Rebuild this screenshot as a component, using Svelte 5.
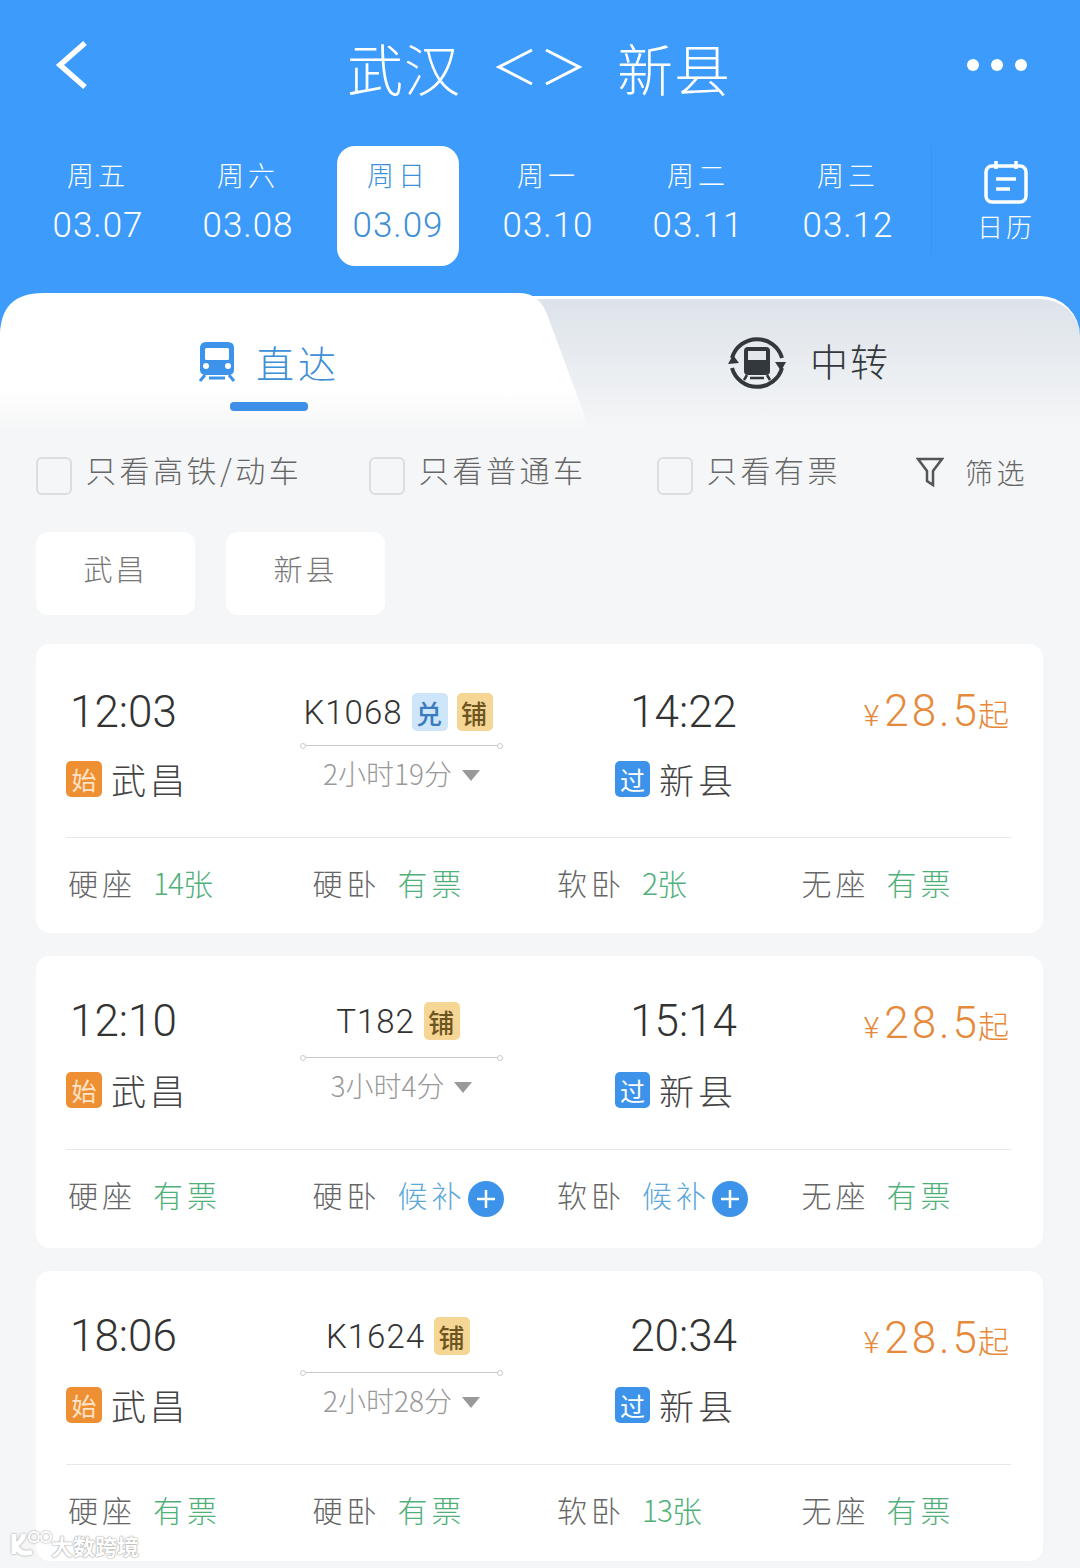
<script>
  const days = [
    { week: "周五", date: "03.07" },
    { week: "周六", date: "03.08" },
    { week: "周日", date: "03.09", active: true },
    { week: "周一", date: "03.10" },
    { week: "周二", date: "03.11" },
    { week: "周三", date: "03.12" }
  ];

  const filters = [
    { label: "只看高铁/动车", width: 333 },
    { label: "只看普通车", width: 288 },
    { label: "只看有票", width: 259 }
  ];

  const trains = [
    {
      depart: "12:03",
      arrive: "14:22",
      code: "K1068",
      tags: ["兑", "铺"],
      duration: "2小时19分",
      seats: [
        { name: "硬座", value: "14张", num: true },
        { name: "硬卧", value: "有票" },
        { name: "软卧", value: "2张", num: true },
        { name: "无座", value: "有票" }
      ]
    },
    {
      depart: "12:10",
      arrive: "15:14",
      code: "T182",
      tags: ["铺"],
      duration: "3小时4分",
      seats: [
        { name: "硬座", value: "有票" },
        { name: "硬卧", value: "候补", wait: true },
        { name: "软卧", value: "候补", wait: true },
        { name: "无座", value: "有票" }
      ]
    },
    {
      depart: "18:06",
      arrive: "20:34",
      code: "K1624",
      tags: ["铺"],
      duration: "2小时28分",
      seats: [
        { name: "硬座", value: "有票" },
        { name: "硬卧", value: "有票" },
        { name: "软卧", value: "13张", num: true },
        { name: "无座", value: "有票" }
      ]
    }
  ];
</script>

<div class="page">
  <header class="top">
    <div class="nav">
      <svg class="back" viewBox="0 0 34 50" width="34" height="50">
        <path d="M30 3 L5 25 L30 47" fill="none" stroke="#fff" stroke-width="5.5" />
      </svg>
      <div class="title">
        <span>武汉</span>
        <svg viewBox="0 0 86 40" width="86" height="40">
          <path d="M36 3 L3 20 L36 37 M50 3 L83 20 L50 37" fill="none" stroke="#fff" stroke-width="3" />
        </svg>
        <span>新县</span>
      </div>
      <div class="dots"><i></i><i></i><i></i></div>
    </div>

    <div class="dates">
      {#each days as day}
        <div class="day" class:active={day.active}>
          <span class="week">{day.week}</span>
          <span class="date">{day.date}</span>
        </div>
      {/each}
      <div class="calendar">
        <svg viewBox="0 0 44 44" width="44" height="44">
          <rect x="2" y="6" width="40" height="36" rx="6" fill="none" stroke="#fff" stroke-width="3.5" />
          <path d="M12 1 V9 M32 1 V9 M12 19 H32 M12 29 H26" fill="none" stroke="#fff" stroke-width="3.5" />
        </svg>
        <span>日历</span>
      </div>
    </div>
  </header>

  <div class="tabs-wrap">
    <div class="tabs">
      <div class="tab tab-on">
        <div class="tab-label">
          <svg viewBox="0 0 38 40" width="38" height="40">
            <path d="M8 0 H30 Q36 0 36 6 V28 Q36 33 30 33 H8 Q2 33 2 28 V6 Q2 0 8 0 Z" fill="#3d93ea" />
            <rect x="7" y="6" width="24" height="12" rx="1.5" fill="#fff" />
            <circle cx="8" cy="24" r="3" fill="#fff" />
            <circle cx="30" cy="24" r="3" fill="#fff" />
            <path d="M7 33 L2 39 M31 33 L36 39 M11 36 H27" stroke="#3d93ea" stroke-width="3" fill="none" />
          </svg>
          <span>直达</span>
        </div>
        <i class="underline"></i>
      </div>
      <div class="tab tab-off">
        <svg viewBox="0 0 58 58" width="58" height="58">
          <path d="M4 24 A26 26 0 0 1 54 24 M54 34 A26 26 0 0 1 4 34" fill="none" stroke="#33383c" stroke-width="4" />
          <path d="M0 30 L5 21 L11 29 Z M47 28 L53 37 L58 28 Z" fill="#33383c" />
          <path d="M20 13 H38 Q42 13 42 17 V37 Q42 41 38 41 H20 Q16 41 16 37 V17 Q16 13 20 13 Z" fill="#33383c" />
          <rect x="20" y="17" width="18" height="9" fill="#e3e7ec" />
          <path d="M19 41 L16 46 M39 41 L42 46 M22 44 H36" stroke="#33383c" stroke-width="2.5" fill="none" />
        </svg>
        <span>中转</span>
      </div>
    </div>
  </div>

  <div class="filters">
    {#each filters as item}
      <div class="filter" style="width:{item.width}px">
        <i class="box"></i>
        <span>{item.label}</span>
      </div>
    {/each}
    <div class="filter-btn">
      <svg viewBox="0 0 28 30" width="28" height="30">
        <path d="M2 2 H26 L17 14 V28 L11 24 V14 Z" fill="none" stroke="#555" stroke-width="2.5" />
      </svg>
      <span>筛选</span>
    </div>
  </div>

  <div class="chips">
    <div class="chip">武昌</div>
    <div class="chip">新县</div>
  </div>

  <div class="cards">
    {#each trains as train}
      <section class="card">
        <div class="main">
          <div class="col">
            <div class="time">{train.depart}</div>
            <div class="station"><b class="badge start">始</b>武昌</div>
          </div>
          <div class="mid">
            <div class="code">
              <span>{train.code}</span>
              {#each train.tags as tag}
                <b class="tag" class:swap={tag === "兑"}>{tag}</b>
              {/each}
            </div>
            <div class="line"></div>
            <div class="duration">{train.duration}<i class="caret"></i></div>
          </div>
          <div class="col arrive">
            <div class="time">{train.arrive}</div>
            <div class="station"><b class="badge pass">过</b>新县</div>
          </div>
          <div class="price"><small>¥</small>28.5<small class="from">起</small></div>
        </div>
        <div class="seats">
          {#each train.seats as seat}
            <div class="seat">
              <span class="seat-name">{seat.name}</span>
              <span class="seat-value" class:wait={seat.wait} class:num={seat.num}>{seat.value}</span>
              {#if seat.wait}
                <svg class="plus" viewBox="0 0 36 36" width="36" height="36">
                  <circle cx="18" cy="18" r="18" fill="#3d93ea" />
                  <path d="M9 18 H27 M18 9 V27" stroke="#fff" stroke-width="2.5" />
                </svg>
              {/if}
            </div>
          {/each}
        </div>
      </section>
    {/each}
  </div>

  <div class="mark">
    <svg viewBox="0 0 46 34" width="46" height="34">
      <path d="M6 6 V26 M6 18 Q14 14 16 6 M8 18 Q12 28 24 24" fill="none" stroke="#fff" stroke-width="5" />
      <circle cx="26" cy="9" r="5" fill="none" stroke="#fff" stroke-width="2" />
      <circle cx="38" cy="9" r="5" fill="none" stroke="#fff" stroke-width="2" />
    </svg>
    <span>大数跨境</span>
  </div>
</div>

<style>
  :global(body) {
    background: #f5f6f7;
    font-family: "Noto Sans CJK SC", "Noto Sans", sans-serif;
  }

  .page {
    position: relative;
    width: 1080px;
    height: 1568px;
    overflow: hidden;
    background: #f5f6f7;
    font-weight: 300;
  }

  .top {
    height: 296px;
    background: #3d9bfb;
    color: #fff;
  }

  .nav {
    display: flex;
    align-items: center;
    justify-content: space-between;
    height: 130px;
    padding: 0 53px 0 55px;
  }

  .title {
    display: flex;
    align-items: center;
    gap: 35px;
    font-size: 56px;
    line-height: 70px;
    letter-spacing: 1px;
    margin-top: 4px;
    margin-left: 22px;
  }

  .dots {
    display: flex;
    gap: 12px;
  }

  .dots i {
    width: 12px;
    height: 12px;
    border-radius: 50%;
    background: #fff;
  }

  .dates {
    display: grid;
    grid-template-columns: repeat(6, 150px) 1fr;
    padding: 16px 0 0 23px;
  }

  .day {
    justify-self: center;
    width: 122px;
    height: 120px;
    display: flex;
    flex-direction: column;
    align-items: center;
    padding-top: 9px;
    box-sizing: border-box;
    border-radius: 18px;
  }

  .day.active {
    background: #fff;
    color: #3d8fd8;
  }

  .week {
    font-size: 27px;
    line-height: 40px;
    letter-spacing: 4px;
  }

  .date {
    margin-top: 5px;
    font-family: "Roboto", sans-serif;
    font-size: 35px;
    line-height: 52px;
    letter-spacing: 1px;
    font-weight: 300;
  }

  .calendar {
    display: flex;
    flex-direction: column;
    align-items: center;
    gap: 4px;
    margin-left: 8px;
    padding-top: 14px;
    height: 94px;
    border-left: 1px solid #3a94ef;
    font-size: 26px;
    line-height: 36px;
    letter-spacing: 3px;
  }

  .tabs-wrap {
    background: #3d9bfb;
  }

  .tabs {
    display: flex;
    height: 134px;
    background: linear-gradient(#dde3ea, #f5f6f7);
    border-radius: 40px 40px 0 0;
    border-top: 3px solid #fff;
    box-sizing: border-box;
  }

  .tab {
    display: flex;
    align-items: center;
  }

  .tab-on {
    position: relative;
    width: 590px;
    height: 137px;
    padding-right: 52px;
    box-sizing: border-box;
    margin-top: -6px;
    flex-direction: column;
    background: linear-gradient(#fff 70%, #f5f6f7);
    clip-path: path("M0 43 Q0 0 43 0 H520 Q540 0 548 24 L590 137 H0 Z");
    color: #3d8fd8;
  }

  .tab-label {
    display: flex;
    align-items: center;
    gap: 20px;
    margin-top: 44px;
    font-size: 38px;
    line-height: 50px;
    letter-spacing: 4px;
  }

  .underline {
    width: 78px;
    height: 9px;
    margin-top: 15px;
    border-radius: 4px;
    background: #3d8fe8;
  }

  .tab-off {
    flex: 1;
    gap: 24px;
    padding-left: 138px;
    padding-bottom: 10px;
    font-size: 38px;
    letter-spacing: 2px;
    color: #33383c;
  }

  .tab-off svg {
    margin-top: 6px;
  }

  .filters {
    display: flex;
    align-items: center;
    padding: 23px 0 0 36px;
    color: #666;
    font-size: 30px;
    line-height: 46px;
    letter-spacing: 3.5px;
  }

  .filter {
    display: flex;
    align-items: center;
    gap: 14px;
  }

  .filter span {
    margin-top: -10px;
  }

  .box {
    width: 36px;
    height: 38px;
    border: 2px solid #ddd;
    border-radius: 6px;
    box-sizing: border-box;
    margin-top: 4px;
  }

  .filter-btn {
    display: flex;
    align-items: center;
    gap: 21px;
    margin-top: -5px;
    font-size: 28px;
  }

  .chips {
    display: flex;
    gap: 31px;
    padding: 37px 0 0 36px;
  }

  .chip {
    width: 159px;
    height: 83px;
    padding-bottom: 11px;
    display: flex;
    align-items: center;
    justify-content: center;
    border-radius: 12px;
    background: #fff;
    box-sizing: border-box;
    color: #777;
    font-size: 29px;
    letter-spacing: 3px;
  }

  .cards {
    display: flex;
    flex-direction: column;
    gap: 23px;
    margin: 29px 37px 0 36px;
  }

  .card {
    height: 290px;
    border-radius: 14px;
    background: #fff;
    box-sizing: border-box;
    padding: 0 32px 0 30px;
  }

  .card:nth-child(1) {
    height: 289px;
  }

  .card:nth-child(2) {
    height: 292px;
  }

  .main {
    position: relative;
    display: grid;
    grid-template-columns: 234px 203px 234px 1fr;
    height: 194px;
    box-sizing: border-box;
    padding-top: 40px;
    border-bottom: 1px solid #e8e8e8;
  }

  .card:first-child .main {
    padding-top: 43px;
  }

  .col {
    padding-left: 4px;
  }

  .time {
    font-family: "Roboto", sans-serif;
    font-size: 44px;
    font-weight: 300;
    line-height: 50px;
    color: #333;
  }

  .station {
    display: flex;
    align-items: center;
    margin: 26px 0 0 -4px;
    font-size: 35px;
    line-height: 36px;
    letter-spacing: 4px;
    color: #444;
  }

  .card:first-child .station {
    margin-top: 24px;
  }

  .badge {
    width: 36px;
    height: 36px;
    display: flex;
    align-items: center;
    justify-content: center;
    margin-right: 9px;
    border-radius: 5px;
    font-size: 25px;
    font-weight: 400;
    letter-spacing: 0;
    color: #fff;
  }

  .start {
    background: #ef8f33;
    color: #fde4c8;
  }

  .pass {
    background: #3d93ea;
  }

  .mid {
    display: flex;
    flex-direction: column;
    align-items: center;
  }

  .code {
    display: flex;
    align-items: center;
    gap: 9px;
    height: 50px;
    margin-right: 7px;
    font-family: "Roboto", sans-serif;
    font-size: 33px;
    font-weight: 300;
    letter-spacing: 1px;
    color: #333;
  }

  .tag {
    width: 36px;
    height: 38px;
    display: flex;
    align-items: center;
    justify-content: center;
    border-radius: 5px;
    background: #f5d694;
    color: #6d5522;
    font-family: "Noto Sans CJK SC", sans-serif;
    font-size: 26px;
    font-weight: 500;
  }

  .tag.swap {
    background: #cfe5fa;
    color: #3a7bbd;
  }

  .line {
    position: relative;
    width: 100%;
    height: 1px;
    margin-top: 11px;
    background: #c8c8c8;
  }

  .card:first-child .line {
    margin-top: 8px;
  }

  .line::before,
  .line::after {
    content: "";
    position: absolute;
    top: -2px;
    width: 4px;
    height: 4px;
    border: 1px solid #ccc;
    border-radius: 50%;
    background: #fff;
  }

  .line::before {
    left: 0;
  }

  .line::after {
    right: 0;
  }

  .duration {
    display: flex;
    align-items: center;
    gap: 10px;
    margin-top: 7px;
    font-size: 28px;
    line-height: 40px;
    color: #999;
  }

  .caret {
    width: 0;
    height: 0;
    border-left: 9px solid transparent;
    border-right: 9px solid transparent;
    border-top: 11px solid #999;
    margin-top: 4px;
  }

  .arrive {
    padding-left: 116px;
    padding-right: 0;
  }

  .arrive .time {
    text-align: right;
  }

  .arrive .station {
    white-space: nowrap;
  }

  .price {
    position: absolute;
    right: 2px;
    top: 39px;
    font-family: "Roboto", sans-serif;
    font-size: 44px;
    font-weight: 300;
    line-height: 56px;
    letter-spacing: 3px;
    color: #e6893a;
  }

  .price small {
    font-size: 30px;
    letter-spacing: 0;
    margin-right: 5px;
  }

  .price .from {
    font-family: "Noto Sans CJK SC", sans-serif;
    font-size: 31px;
    margin: 0 0 0 -2px;
  }

  .seats {
    display: grid;
    grid-template-columns: repeat(4, 244.5px);
    padding: 21px 0 0 2px;
  }

  .seat {
    display: flex;
    align-items: center;
    height: 46px;
    font-size: 30px;
    letter-spacing: 4px;
  }

  .seat-name {
    width: 86px;
    flex: none;
    color: #666;
  }

  .seat-value {
    margin-left: -1px;
    color: #4fb07a;
  }

  .seat-value.num {
    letter-spacing: -1px;
  }

  .seat-value.wait {
    color: #5da8d8;
  }

  .plus {
    margin: 10px 0 0 2px;
  }

  .mark {
    position: absolute;
    left: 8px;
    bottom: 6px;
    display: flex;
    align-items: center;
    color: #fff;
    font-size: 22px;
    font-weight: 700;
    text-shadow: 0 0 2px #999, 0 0 1px #999;
  }

  .mark span {
    margin-left: -3px;
  }

  .mark svg {
    filter: drop-shadow(0 0 1px #999);
  }
</style>
